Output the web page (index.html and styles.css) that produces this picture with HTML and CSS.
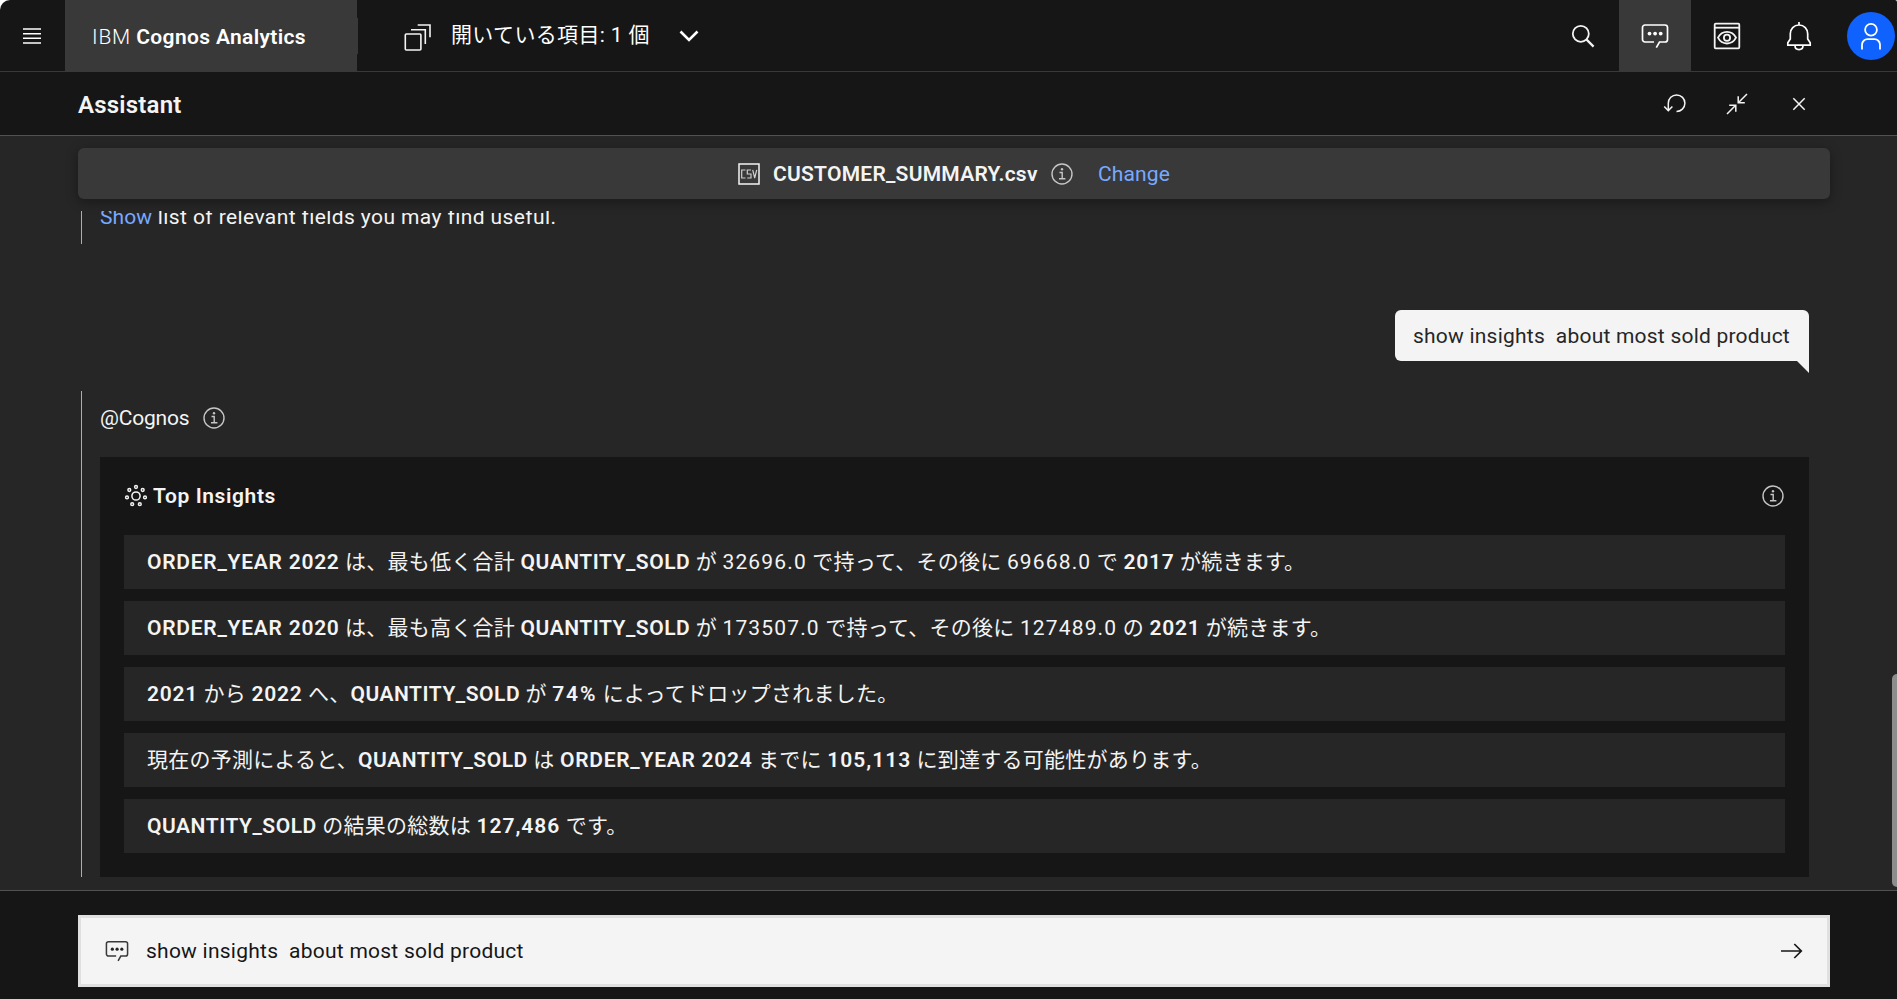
FILE: index.html
```html
<!DOCTYPE html>
<html lang="ja">
<head>
<meta charset="utf-8">
<title>IBM Cognos Analytics</title>
<link rel="stylesheet" href="styles.css">
</head>
<body>
<div class="app">
  <header class="topbar">
    <button class="menu" aria-label="Menu"><svg width="18" height="16" viewBox="0 0 18 16"><path d="M0 1h18M0 5.7h18M0 10.3h18M0 15h18" stroke="#fff" stroke-width="1.5"/></svg></button>
    <div class="brand"><span class="ibm">IBM</span> <strong>Cognos Analytics</strong></div>
    <div class="open-items">
      <svg class="ic-stack" width="28" height="28" viewBox="0 0 28 28" fill="none" stroke="#f4f4f4" stroke-width="1.6"><rect x="1.3" y="10" width="15.6" height="16" rx="1"/><path d="M7 5.7h14.300v14.300M13.700 1h12.300v12.200"/></svg>
      <span class="open-label">開いている項目: 1 個</span>
      <svg class="ic-chev" width="20" height="13" viewBox="0 0 20 13"><path d="M1.500 1.500 10 10l8.500-8.500" fill="none" stroke="#fff" stroke-width="2.600"/></svg>
    </div>
    <nav class="actions">
      <button class="act"><svg width="24" height="24" viewBox="0 0 24 24" fill="none" stroke="#f4f4f4"><circle cx="9.800" cy="9.800" r="8" stroke-width="1.800"/><path d="m15.600 15.600 7 7" stroke-width="2.200"/></svg></button>
      <button class="act active"><svg width="28" height="28" viewBox="0 0 28 28"><path d="M13 20H4a2.500 2.500 0 0 1-2.500-2.500v-12A2.500 2.500 0 0 1 4 3h20a2.500 2.500 0 0 1 2.500 2.500v12A2.500 2.500 0 0 1 24 20h-5.500L15.300 25.600" fill="none" stroke="#fff" stroke-width="1.700"/><circle cx="8.500" cy="11.600" r="1.900" fill="#fff"/><circle cx="14.100" cy="11.600" r="1.900" fill="#fff"/><circle cx="19.700" cy="11.600" r="1.900" fill="#fff"/></svg></button>
      <button class="act"><svg width="28" height="28" viewBox="0 0 28 28" fill="none" stroke="#f4f4f4" stroke-width="1.800"><rect x="1.700" y="1.700" width="24.600" height="24.600" rx="1"/><path d="M2 5.700h24"/><path d="M5 15.700c4-7.700 14-7.700 18 0-4 7.700-14 7.700-18 0z"/><circle cx="14" cy="15.700" r="3.100"/></svg></button>
      <button class="act"><svg width="26" height="30" viewBox="0 0 26 30" fill="none" stroke="#fff" stroke-width="1.700"><path d="M13 4c-5.200 0-8.700 4-8.700 8.800v5.200L1.800 21.800v2.400h22.400v-2.400L21.700 18v-5.200C21.700 8 18.200 4 13 4zM13 1v3M9 24.500c0 5.400 8 5.400 8 0"/></svg></button>
      <div class="avatar"><svg width="22" height="28" viewBox="0 0 22 28" fill="none" stroke="#fff" stroke-width="1.800"><circle cx="11" cy="7.700" r="5.900"/><path d="M2 27.500v-5a5.500 5.500 0 0 1 5.500-5.300h7a5.500 5.500 0 0 1 5.500 5.300v5"/></svg></div>
    </nav>
  </header>

  <div class="subbar">
    <h1>Assistant</h1>
    <div class="tools">
      <svg width="24" height="22" viewBox="0 0 24 22" fill="none" stroke="#f4f4f4" stroke-width="1.500"><path d="M13.500 18.500A8.300 8.300 0 1 0 5.300 10.200v7.300"/><path d="m1.200 13.500 4.100 4.100 4.100-4.100"/></svg>
      <svg width="24" height="24" viewBox="0 0 24 24" fill="none" stroke="#f4f4f4" stroke-width="1.500"><path d="m2 22 8.700-8.700M4.200 13.200h6.600v6.600M22 2l-8.700 8.700M13.200 4.200v6.600h6.600"/></svg>
      <svg width="14" height="14" viewBox="0 0 14 14"><path d="m1.300 1.300 11.400 11.400M12.700 1.300 1.300 12.700" stroke="#f4f4f4" stroke-width="1.500"/></svg>
    </div>
  </div>

  <main class="chat">
    <div class="source">
      <svg class="ic-csv" width="22" height="22" viewBox="0 0 22 22" fill="none" stroke="#f4f4f4"><rect x="1" y="1" width="20" height="20" stroke-width="1.500"/><g stroke="#d0d0d0" stroke-width="1.200"><path d="M7.500 7H3.700v8h3.800M13 7H9.300v4H13v4H9.200M14.700 6.800l2 8.200 2-8.200"/></g></svg>
      <strong class="file">CUSTOMER_SUMMARY.csv</strong>
      <svg class="ic-info" width="22" height="22" viewBox="0 0 22 22" fill="none" stroke="#c6c6c6" stroke-width="1.400"><circle cx="11" cy="11" r="10"/><path d="M8.500 9.500h2.700v6.200M8 15.800h6.400"/><circle cx="11" cy="6.200" r="1.200" fill="#c6c6c6" stroke="none"/></svg>
      <a class="link change">Change</a>
    </div>
    <div class="log">
      <p class="hint"><a class="link">Show</a> list of relevant fields you may find useful.</p>
      <div class="bubble">show insights  about most sold product</div>
      <section class="reply">
        <div class="who"><span>@Cognos</span><svg width="22" height="22" viewBox="0 0 22 22" fill="none" stroke="#c6c6c6" stroke-width="1.400"><circle cx="11" cy="11" r="10"/><path d="M8.500 9.500h2.700v6.200M8 15.800h6.400"/><circle cx="11" cy="6.200" r="1.200" fill="#c6c6c6" stroke="none"/></svg></div>
        <div class="panel">
          <div class="panel-head">
            <svg width="24" height="24" viewBox="0 0 24 24" fill="none" stroke="#f4f4f4" stroke-width="1.500"><circle cx="12" cy="12" r="4.100"/><circle cx="12" cy="3" r="1.400"/><circle cx="18.700" cy="6" r="1.400"/><circle cx="21" cy="13.400" r="1.400"/><circle cx="15.800" cy="20.200" r="1.400"/><circle cx="8.200" cy="20.200" r="1.400"/><circle cx="3" cy="13.400" r="1.400"/><circle cx="5.300" cy="6" r="1.400"/></svg>
            <h2>Top Insights</h2>
            <svg class="end" width="22" height="22" viewBox="0 0 22 22" fill="none" stroke="#c6c6c6" stroke-width="1.400"><circle cx="11" cy="11" r="10"/><path d="M8.500 9.500h2.700v6.200M8 15.800h6.400"/><circle cx="11" cy="6.200" r="1.200" fill="#c6c6c6" stroke="none"/></svg>
          </div>
          <ul class="insights">
            <li><b>ORDER_YEAR 2022</b> は、最も低く合計 <b class="col">QUANTITY_SOLD</b> が <span class="num">32696.0</span> で持って、その後に <span class="num">69668.0</span> で <b>2017</b> が続きます。</li>
            <li><b>ORDER_YEAR 2020</b> は、最も高く合計 <b class="col">QUANTITY_SOLD</b> が <span class="num">173507.0</span> で持って、その後に <span class="num">127489.0</span> の <b>2021</b> が続きます。</li>
            <li><b>2021</b> から <b>2022</b> へ、<b class="col">QUANTITY_SOLD</b> が <b class="pct">74%</b> によってドロップされました。</li>
            <li>現在の予測によると、<b class="col">QUANTITY_SOLD</b> は <b>ORDER_YEAR 2024</b> までに <b class="sum">105,113</b> に到達する可能性があります。</li>
            <li><b class="col">QUANTITY_SOLD</b> の結果の総数は <b class="sum">127,486</b> です。</li>
          </ul>
        </div>
      </section>
    </div>
    <div class="thumb"></div>
  </main>

  <footer class="composer">
    <div class="field">
      <svg width="24" height="22" viewBox="0 0 28 26"><path d="M13 19H4a2.500 2.500 0 0 1-2.500-2.500v-12A2.500 2.500 0 0 1 4 2h20a2.500 2.500 0 0 1 2.500 2.500v12A2.500 2.500 0 0 1 24 19h-5.500L15.300 24.600" fill="none" stroke="#393939" stroke-width="1.800"/><circle cx="8.500" cy="10.800" r="1.900" fill="#262626"/><circle cx="14.100" cy="10.800" r="1.900" fill="#262626"/><circle cx="19.700" cy="10.800" r="1.900" fill="#262626"/></svg>
      <span class="typed">show insights  about most sold product</span>
      <svg class="end" width="22" height="16" viewBox="0 0 22 16" fill="none" stroke="#161616" stroke-width="1.700"><path d="M0 8h20M13.300 1l7 7-7 7"/></svg>
    </div>
  </footer>
</div>
</body>
</html>
```
FILE: styles.css
```css
* { box-sizing: border-box; }
body {
  margin: 0;
  background: #fff;
  color: #f4f4f4;
  font: 21px/27px Roboto, "Noto Sans CJK JP", sans-serif;
}
button { border: 0; padding: 0; background: none; display: flex; align-items: center; justify-content: center; }
svg { display: block; flex: none; }
h1, h2, p, ul { margin: 0; padding: 0; }
.link { color: #78a9ff; }
.end { margin-left: auto; }

.app {
  height: 999px;
  display: flex;
  flex-direction: column;
  overflow: hidden;
  background: #161616;
  border-radius: 10px 2px 0 0;
}

.topbar { height: 72px; flex: none; display: flex; border-bottom: 1px solid #393939; }
.menu { width: 65px; height: 71px; padding: 1px 1px 0 0; }
.brand {
  position: relative;
  width: 292px;
  height: 71px;
  padding: 24px 0 0 27px;
  background: #393939;
  color: #fff;
  white-space: nowrap;
}
.brand::after { content: ""; position: absolute; left: 100%; top: 18px; width: 1px; height: 36px; background: #393939; }
.ibm { font-weight: 300; letter-spacing: .8px; }
.brand strong { font-weight: 600; letter-spacing: .35px; }
.open-items { display: flex; align-items: flex-start; margin-left: 47px; }
.ic-stack { margin-top: 24px; }
.open-label { margin: 22px 0 0 19px; width: 199px; white-space: nowrap; letter-spacing: .35px; color: #fff; }
.ic-chev { margin: 30px 0 0 29px; }
.actions { display: flex; margin-left: auto; padding-right: 2px; }
.act { width: 72px; height: 71px; }
.act.active { background: #393939; }
.avatar {
  width: 48px;
  height: 48px;
  margin: 12px 0 0 12px;
  border-radius: 50%;
  background: #0f62fe;
  display: flex;
  align-items: center;
  justify-content: center;
}

.subbar {
  height: 64px;
  flex: none;
  display: flex;
  align-items: center;
  justify-content: space-between;
  padding: 0 91px 0 78px;
  border-bottom: 1px solid #525252;
}
h1 { padding-top: 3px; font-size: 24px; font-weight: 600; letter-spacing: .2px; }
.tools { display: flex; align-items: center; gap: 43px; }
.tools svg:first-child { margin-right: -5px; }

.chat {
  position: relative;
  height: 754px;
  flex: none;
  padding: 12px 67px 0 78px;
  background: #262626;
  overflow: hidden;
}
.source {
  height: 51px;
  display: flex;
  align-items: center;
  padding-left: 660px;
  border-radius: 6px;
  background: #393939;
  box-shadow: 0 3px 12px rgba(0, 0, 0, .35);
}
.file { margin-left: 13px; padding-top: 1px; width: 265px; font-weight: 600; letter-spacing: .25px; }
.ic-info { margin-left: 13px; }
.change { margin-left: 25px; padding-top: 1px; letter-spacing: .15px; }

/* scrolled conversation, clipped under the source bar */
.log { height: 679px; margin-top: 12px; padding: 0 21px 0 3px; overflow: hidden; display: flex; flex-direction: column; }
.hint {
  height: 51px;
  margin-top: -18px;
  padding: 11px 0 0 18px;
  border-left: 1px solid #be95ff;
  letter-spacing: .4px;
  white-space: nowrap;
  flex: none;
}
.hint .link { letter-spacing: .1px; }
.bubble {
  position: relative;
  align-self: flex-end;
  width: 414px;
  height: 51px;
  margin-top: 66px;
  padding: 13px 18px 11px;
  border-radius: 6px 6px 0 6px;
  background: #f4f4f4;
  color: #262626;
  white-space: pre;
  letter-spacing: .22px;
  flex: none;
}
.bubble::after {
  content: "";
  position: absolute;
  right: 0;
  top: 100%;
  border-style: solid;
  border-width: 0 12px 12px 0;
  border-color: transparent #f4f4f4 transparent transparent;
}
.reply { height: 486px; flex: none; margin-top: 30px; padding-left: 18px; border-left: 1px solid #be95ff; }
.who { height: 66px; display: flex; align-items: flex-start; padding-top: 14px; letter-spacing: -.2px; }
.who svg { margin: 2px 0 0 14px; }
.panel { height: 420px; padding: 0 24px; background: #161616; }
.panel-head { height: 78px; display: flex; align-items: center; }
.panel-head .end { margin-right: 1px; }
h2 { margin-left: 5px; font-size: 21px; font-weight: 600; letter-spacing: .6px; }
.insights { list-style: none; display: flex; flex-direction: column; gap: 12px; }
.insights li { height: 54px; padding: 14px 24px 0 23px; background: #262626; white-space: nowrap; letter-spacing: .25px; }
.insights b { font-weight: 600; letter-spacing: .75px; }
.insights .col { letter-spacing: .52px; }
.insights .num { letter-spacing: 1.15px; }
.insights .sum { letter-spacing: 1px; }
.insights .pct { letter-spacing: 1.8px; }
.thumb { position: absolute; right: 0; top: 538px; width: 5px; height: 213px; border-radius: 5px 0 0 5px; background: #8d8d8d; }

.composer { flex: 1; border-top: 1px solid #525252; padding: 24px 67px 0 78px; }
.field {
  height: 72px;
  display: flex;
  align-items: center;
  padding: 0 24px;
  border: 3px solid #e0e0e0;
  background: #f4f4f4;
  color: #161616;
}
.typed { margin-left: 17px; white-space: pre; letter-spacing: .24px; }
```
